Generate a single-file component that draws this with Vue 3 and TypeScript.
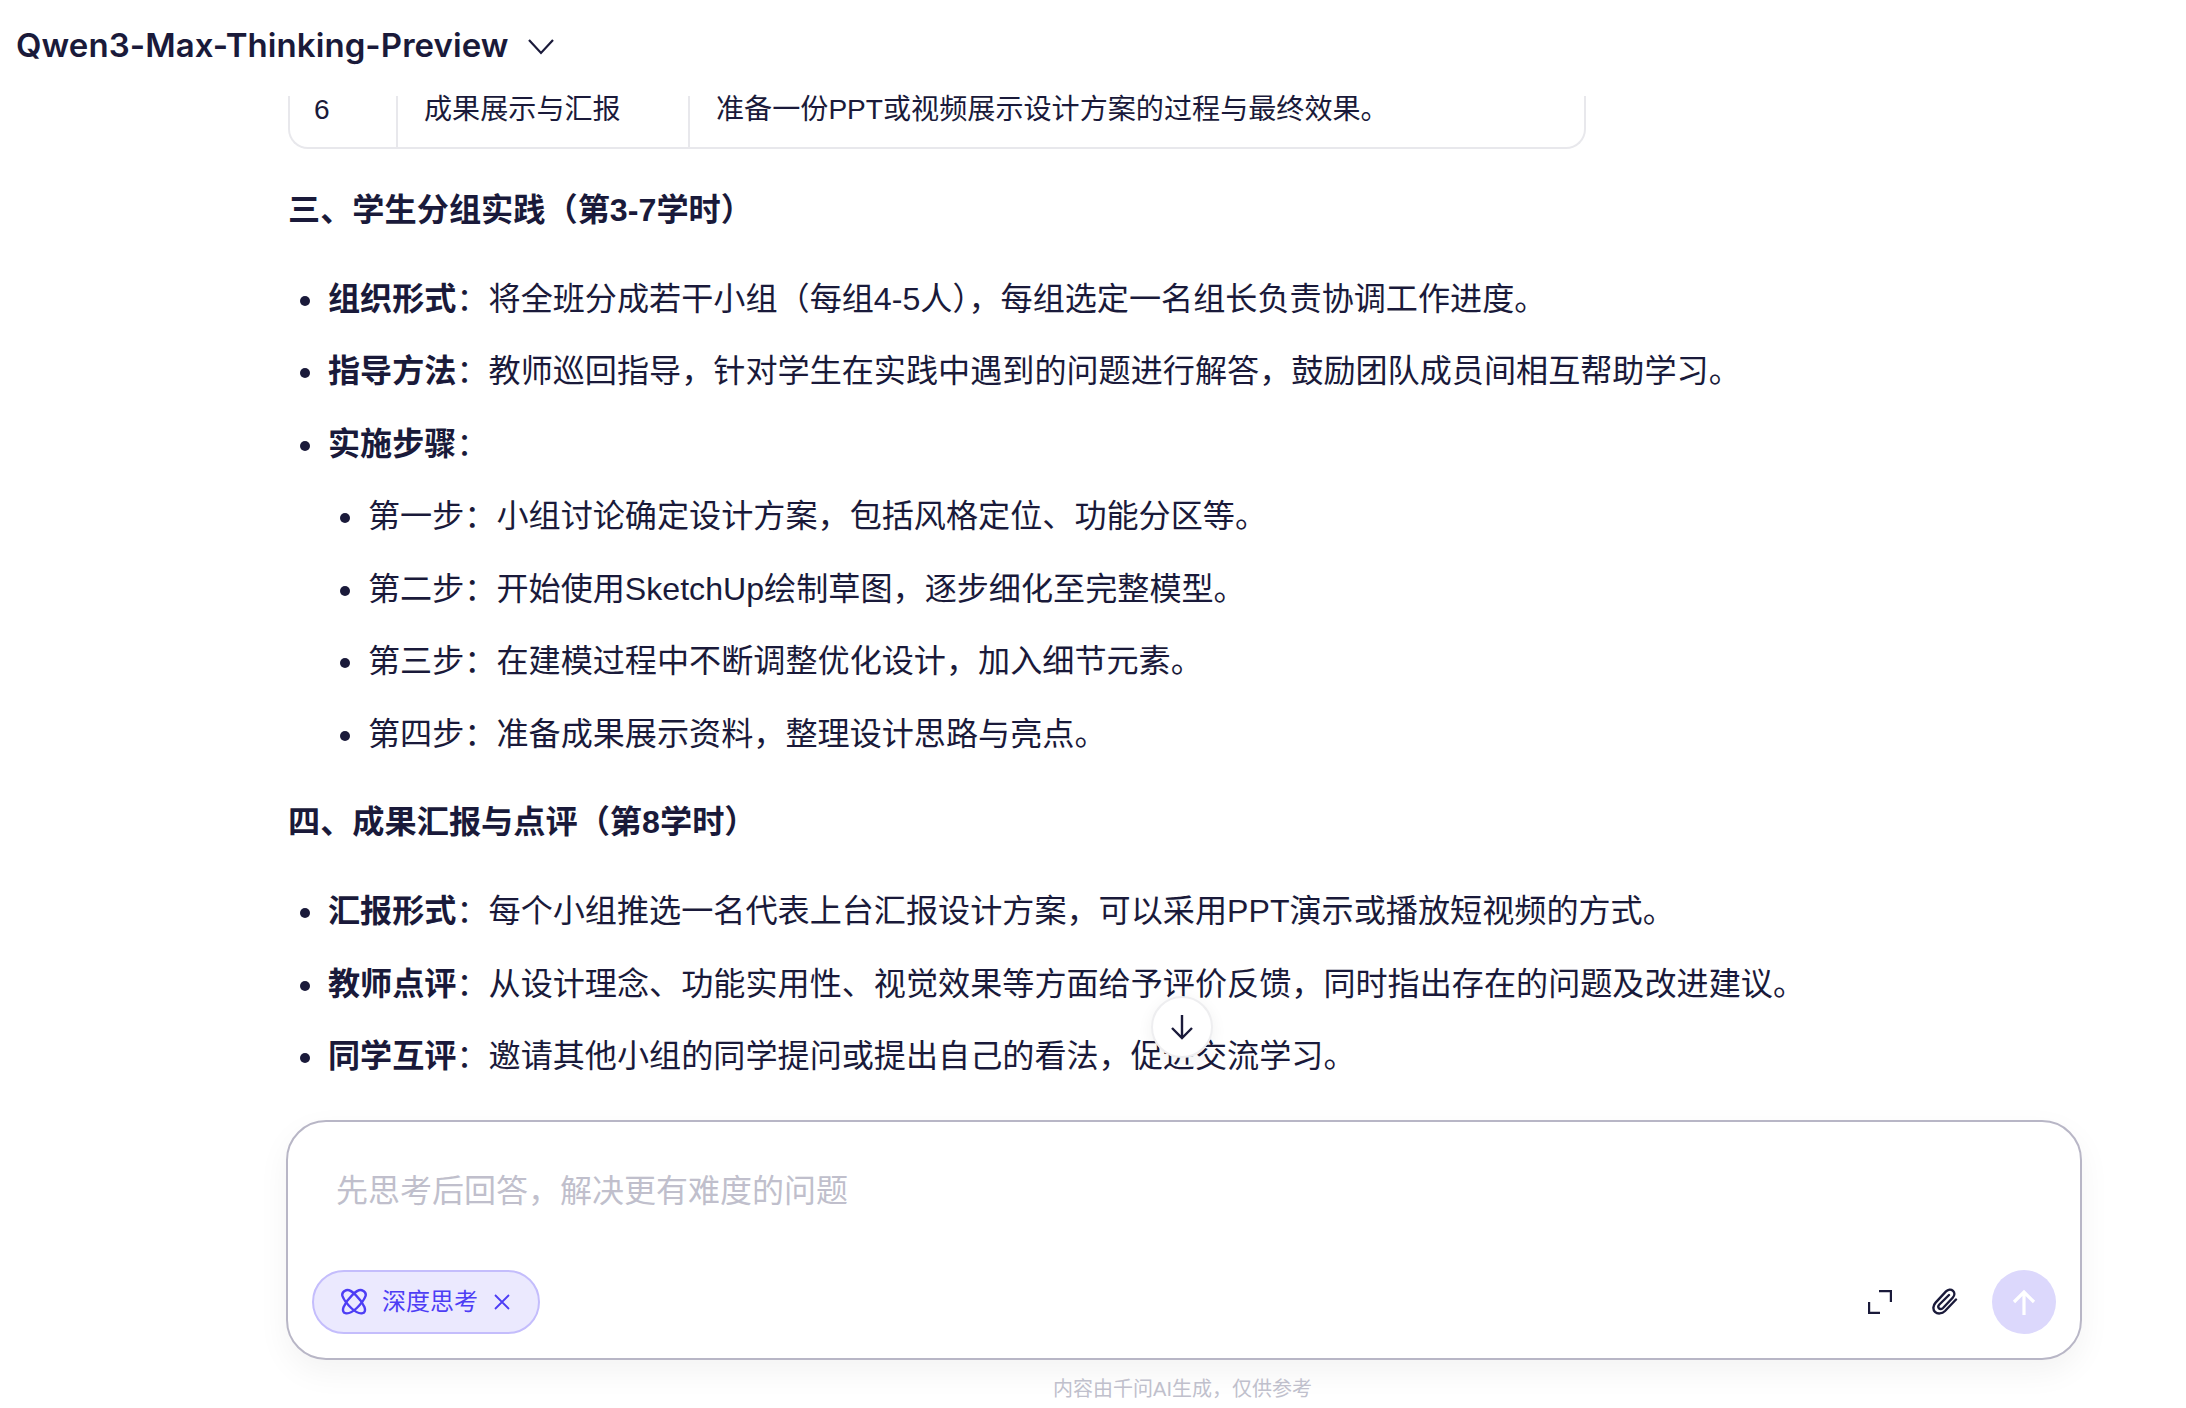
<script setup lang="ts">
interface Item { label?: string; text: string; children?: string[] }
const practice: Item[] = [
  { label: '组织形式', text: '将全班分成若干小组（每组4-5人），每组选定一名组长负责协调工作进度。' },
  { label: '指导方法', text: '教师巡回指导，针对学生在实践中遇到的问题进行解答，鼓励团队成员间相互帮助学习。' },
  { label: '实施步骤', text: '', children: [
    '第一步：小组讨论确定设计方案，包括风格定位、功能分区等。',
    '第二步：开始使用SketchUp绘制草图，逐步细化至完整模型。',
    '第三步：在建模过程中不断调整优化设计，加入细节元素。',
    '第四步：准备成果展示资料，整理设计思路与亮点。'
  ] }
]
const report: Item[] = [
  { label: '汇报形式', text: '每个小组推选一名代表上台汇报设计方案，可以采用PPT演示或播放短视频的方式。' },
  { label: '教师点评', text: '从设计理念、功能实用性、视觉效果等方面给予评价反馈，同时指出存在的问题及改进建议。' },
  { label: '同学互评', text: '邀请其他小组的同学提问或提出自己的看法，促进交流学习。' }
]
</script>

<template>
  <div class="page">
    <header class="top">
      <span class="model">Qwen3-Max-Thinking-Preview</span>
      <svg class="chev" width="26" height="22" viewBox="0 0 26 22" fill="none"><path d="M1 5l12 13L25 5" stroke="#1a1a3a" stroke-width="2.2"/></svg>
    </header>

    <main class="scroll">
      <div class="table">
        <div class="cell c1">6</div>
        <div class="cell c2">成果展示与汇报</div>
        <div class="cell c3">准备一份PPT或视频展示设计方案的过程与最终效果。</div>
      </div>

      <h3 class="h h-first">三、学生分组实践（第3-7学时）</h3>
      <ul class="list">
        <li v-for="it in practice" :key="it.label">
          <strong>{{ it.label }}</strong>：{{ it.text }}
          <ul v-if="it.children" class="sub">
            <li v-for="c in it.children" :key="c">{{ c }}</li>
          </ul>
        </li>
      </ul>

      <h3 class="h h-second">四、成果汇报与点评（第8学时）</h3>
      <ul class="list">
        <li v-for="it in report" :key="it.label"><strong>{{ it.label }}</strong>：{{ it.text }}</li>
      </ul>
    </main>

    <button class="down" aria-label="down">
      <svg width="24" height="26" viewBox="0 0 24 26" fill="none"><path d="M12 1v23M2 14l10 10 10-10" stroke="#1a1a3a" stroke-width="2.4"/></svg>
    </button>

    <section class="input">
      <div class="placeholder">先思考后回答，解决更有难度的问题</div>
      <div class="bar">
        <div class="chip">
          <svg width="28" height="28" viewBox="0 0 28 28" fill="none" stroke="#4d3df5" stroke-width="2.4">
            <path d="M5.2 2.6c2.6-1.4 6.8.7 10.6 4.6 3.9 3.8 7.2 8.6 8.6 11.8 1.3 3.1.4 5.6-1.8 6.2-3 .8-7.4-1.4-11.4-5.2C7.3 16.2 3.8 11.6 2.6 8.4 1.7 5.9 3.2 3.6 5.2 2.6z"/>
            <path d="M22.8 2.6c-2.6-1.4-6.8.7-10.6 4.6-3.9 3.8-7.2 8.6-8.6 11.8-1.3 3.1-.4 5.6 1.8 6.2 3 .8 7.4-1.4 11.4-5.2 3.9-3.8 7.4-8.4 8.6-11.6.9-2.5-.6-4.8-2.6-5.8z"/>
          </svg>
          <span class="chip-text">深度思考</span>
          <svg width="16" height="16" viewBox="0 0 16 16" fill="none" stroke="#4d3df5" stroke-width="1.8"><path d="M1 1l14 14M15 1L1 15"/></svg>
        </div>
        <div class="actions">
          <svg width="24" height="24" viewBox="0 0 24 24" fill="none" stroke="#1a1a3a" stroke-width="2.4"><path d="M11 1h12v11M1 12v11h11"/></svg>
          <svg class="clip" width="26" height="28" viewBox="0 0 26 28" fill="none" stroke="#1a1a3a" stroke-width="2.4" stroke-linecap="round"><path d="M24 11.5 13 23c-3 3-7.5 3.2-10 .8-2.4-2.4-2-6.4.6-9.2L14 3.4c2-2 5-2.4 7-.6 2 1.9 1.6 4.8-.3 6.9L11 20c-1.2 1.2-3 1.4-4 .4s-.8-2.6.4-3.9L17 7"/></svg>
          <div class="send">
            <svg width="24" height="26" viewBox="0 0 24 26" fill="none" stroke="#fff" stroke-width="3.2"><path d="M12 26V3M2 13 12 3l10 10"/></svg>
          </div>
        </div>
      </div>
    </section>

    <footer class="foot">内容由千问AI生成，仅供参考</footer>
  </div>
</template>

<style scoped>
.page {
  position: relative;
  height: 1408px;
  width: 2186px;
  overflow: hidden;
  display: flex;
  flex-direction: column;
  background: #fff;
  color: #1a1a3a;
  font-family: "Liberation Sans", "Noto Sans CJK SC", sans-serif;
}
.top {
  height: 90px;
  flex: none;
  display: flex;
  align-items: center;
  gap: 19px;
  padding-left: 16px;
  margin-bottom: 6px;
  box-sizing: border-box;
  font-family: Inter, "Noto Sans CJK SC", sans-serif;
}
.model {
  font-size: 33px;
  font-weight: 600;
  letter-spacing: 0.07px;
}
.chev { margin-top: 2px; }
.scroll {
  flex: none;
  height: 1025px;
  padding-left: 288px;
  font-size: 32.12px;
  line-height: 52px;
  box-sizing: border-box;
}
.table {
  width: 1298px;
  height: 53px;
  display: grid;
  grid-template-columns: 108px 292px 1fr;
  box-sizing: border-box;
  border: 2px solid #e8e8ec;
  border-top: 0;
  border-radius: 0 0 20px 20px;
  font-size: 28.1px;
  line-height: 28px;
}
.cell { padding: 0 24px; box-sizing: border-box; }
.c1, .c2 { border-right: 2px solid #e8e8ec; }
.c2, .c3 { padding-left: 26px; }
.h {
  margin: 34.6px 0 37px;
  font-size: 32.2px;
  line-height: 52px;
  font-weight: 600;
}
.h-second { margin-top: 36.5px; }
.list {
  margin: 0;
  padding: 0 0 0 40px;
  list-style: none;
}
.list li { position: relative; margin-top: 20.5px; }
.list li::before {
  content: "";
  position: absolute;
  left: -28px;
  top: 23px;
  width: 10px;
  height: 10px;
  border-radius: 50%;
  background: #1a1a3a;
}
.list > li:first-child { margin-top: 0; }
.sub { margin: 20.5px 0 0; padding: 0 0 0 40px; list-style: none; }
.sub li:first-child { margin-top: 0; }
.list strong { font-weight: 600; }
.down {
  position: absolute;
  left: 1151px;
  top: 996px;
  width: 62px;
  height: 62px;
  border-radius: 50%;
  border: 2px solid #eeeef0;
  background: #fff;
  box-shadow: 0 4px 16px rgba(0, 0, 0, 0.06);
  display: flex;
  align-items: center;
  justify-content: center;
  padding: 0;
}
.input {
  flex: none;
  margin-left: 286px;
  width: 1796px;
  height: 240px;
  margin-top: -1px;
  box-sizing: border-box;
  border: 2px solid #b8b6c6;
  border-radius: 40px;
  background: #fff;
  box-shadow: 0 12px 32px rgba(0, 0, 0, 0.05);
  padding: 47px 24px 24px;
  display: flex;
  flex-direction: column;
  justify-content: space-between;
}
.placeholder {
  padding-left: 24px;
  font-size: 32px;
  line-height: 44px;
  color: #c0bfcc;
}
.bar {
  display: flex;
  align-items: center;
  justify-content: space-between;
}
.chip {
  height: 64px;
  width: 228px;
  box-sizing: border-box;
  border: 2px solid #c4bdfc;
  border-radius: 32px;
  background: #ebe9fe;
  display: flex;
  align-items: center;
  padding-left: 26px;
  color: #4d3df5;
}
.chip-text { font-size: 24px; margin: 0 16px 0 14px; line-height: 32px; }
.actions { display: flex; align-items: center; }
.clip { margin-left: 40px; }
.send {
  margin-left: 34px;
  width: 64px;
  height: 64px;
  border-radius: 50%;
  background: #dcd8fc;
  display: flex;
  align-items: center;
  justify-content: center;
}
.foot {
  flex: 1;
  text-align: center;
  font-size: 20px;
  line-height: 28px;
  padding-top: 15px;
  color: #c0c0cc;
  width: 2365px;
}
</style>

<style>
html, body { margin: 0; background: #fff; }
</style>
